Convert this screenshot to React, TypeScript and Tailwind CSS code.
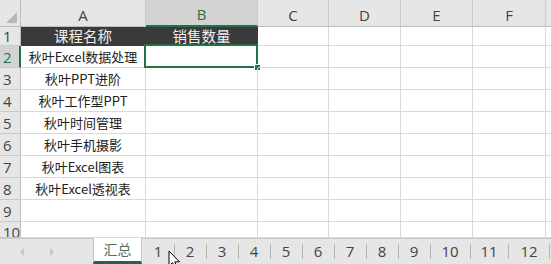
import React from "react";

const cols = ["A", "B", "C", "D", "E", "F", "G"];
const colW = [125, 112, 71, 72, 72, 73, 20];
const rowH = [19, 22, 22, 22, 22, 22, 22, 22, 22, 16];
const data: Record<number, string> = {
  2: "秋叶Excel数据处理",
  3: "秋叶PPT进阶",
  4: "秋叶工作型PPT",
  5: "秋叶时间管理",
  6: "秋叶手机摄影",
  7: "秋叶Excel图表",
  8: "秋叶Excel透视表",
};
const tabs = [
  { t: "1", w: 32 },
  { t: "2", w: 32 },
  { t: "3", w: 32 },
  { t: "4", w: 32 },
  { t: "5", w: 32 },
  { t: "6", w: 32 },
  { t: "7", w: 32 },
  { t: "8", w: 32 },
  { t: "9", w: 32 },
  { t: "10", w: 40 },
  { t: "11", w: 38 },
  { t: "12", w: 42 },
];

const cjk = { fontFamily: '"Microsoft YaHei","Noto Sans CJK SC",sans-serif' };
const latin = { fontFamily: '"Open Sans","Noto Sans",sans-serif' };

export default function App() {
  return (
    <div className="w-[551px] h-[264px] overflow-hidden bg-white relative select-none">
      {/* Header row */}
      <div className="flex h-[27px]">
        <div className="w-[21px] shrink-0 bg-[#e6e6e6] border-r border-b border-[#bcbcbc] relative">
          <div className="absolute right-[3px] bottom-[3px] w-0 h-0 border-l-[11px] border-l-transparent border-b-[11px] border-b-[#b8b8b8]" />
        </div>
        {cols.map((c, i) => (
          <div
            key={c}
            style={{ ...latin, width: colW[i] }}
            className={
              "shrink-0 flex items-end justify-center pb-[1px] text-[15px] leading-[20px] text-[#444] border-r border-[#c9c9c9] " +
              (c === "B"
                ? "bg-[#d3d3d3] border-b-2 border-b-[#217346] text-[#217346]"
                : "bg-[#e6e6e6] border-b border-b-[#bcbcbc]")
            }
          >
            {c === "G" ? "" : c}
          </div>
        ))}
      </div>
      {/* Body rows */}
      {rowH.map((h, ri) => {
        const r = ri + 1;
        return (
          <div key={r} className="flex" style={{ height: h }}>
            <div
              style={latin}
              className={
                "w-[21px] shrink-0 flex pl-[3px] text-[15px] leading-[18px] text-[#444] border-b border-[#c9c9c9] overflow-hidden " +
                (r === 10 ? "items-start pt-[1px] " : r === 1 ? "items-end " : "items-end pb-[1px] ") +
                (r === 2
                  ? "bg-[#d3d3d3] border-r-2 border-r-[#217346] text-[#217346]"
                  : "bg-[#e6e6e6] border-r border-r-[#bcbcbc]")
              }
            >
              {r}
            </div>
            {cols.map((c, ci) => {
              const dark = r === 1 && ci < 2;
              let text = "";
              if (r === 1 && ci === 0) text = "课程名称";
              if (r === 1 && ci === 1) text = "销售数量";
              if (ci === 0 && data[r]) text = data[r];
              return (
                <div
                  key={c}
                  style={{ ...cjk, width: colW[ci] }}
                  className={
                    "shrink-0 relative flex items-end justify-center whitespace-nowrap border-b border-r " +
                    (dark
                      ? "bg-[#3a3a3a] text-[#f0f0f0] text-[14.5px] leading-[18px] border-[#3a3a3a]"
                      : "text-[#222] text-[13px] leading-[21px] border-[#d9d9d9]")
                  }
                >
                  {text}
                  {r === 2 && c === "B" && (
                    <div className="absolute left-[-2px] top-[-2px] right-[-1px] bottom-[-1px] border-2 border-[#217346]">
                      <div className="absolute right-[-5px] bottom-[-5px] w-[7px] h-[7px] bg-[#217346] border border-white" />
                    </div>
                  )}
                </div>
              );
            })}
          </div>
        );
      })}
      {/* Tab bar */}
      <div className="flex h-[26px] bg-[#e6e6e6] border-t border-[#c6c6c6] relative">
        <div className="w-[93px] shrink-0 flex items-center">
          <div className="ml-[20px] w-0 h-0 border-y-[4px] border-y-transparent border-r-[4px] border-r-[#c4c4c4]" />
          <div className="ml-[26px] w-0 h-0 border-y-[4px] border-y-transparent border-l-[4px] border-l-[#c4c4c4]" />
        </div>
        <div
          style={cjk}
          className="w-[49px] shrink-0 -mt-px bg-white border-x border-[#c6c6c6] border-b-[3px] border-b-[#2b6045] flex items-center justify-center text-[14px] text-[#4a6e5a]"
        >
          汇总
        </div>
        {tabs.map((tb, i) => (
          <div
            key={tb.t}
            style={{ ...latin, width: tb.w }}
            className="shrink-0 relative flex items-center justify-center text-[15px] text-[#444]"
          >
            {tb.t}
            {i > 0 && <div className="absolute left-0 top-[5px] h-[15px] w-px bg-[#b5b5b5]" />}
            {i === tabs.length - 1 && (
              <div className="absolute right-0 top-[5px] h-[15px] w-px bg-[#b5b5b5]" />
            )}
          </div>
        ))}
      </div>
      {/* Mouse cursor */}
      <svg className="absolute left-[168px] top-[250px]" width="13" height="19" viewBox="0 0 13 19">
        <path
          d="M1 1 L1 16 L4.5 12.5 L7 18 L9 17 L6.8 11.8 L11.5 11.8 Z"
          fill="#fff"
          stroke="#000"
          strokeWidth="1"
        />
      </svg>
    </div>
  );
}
